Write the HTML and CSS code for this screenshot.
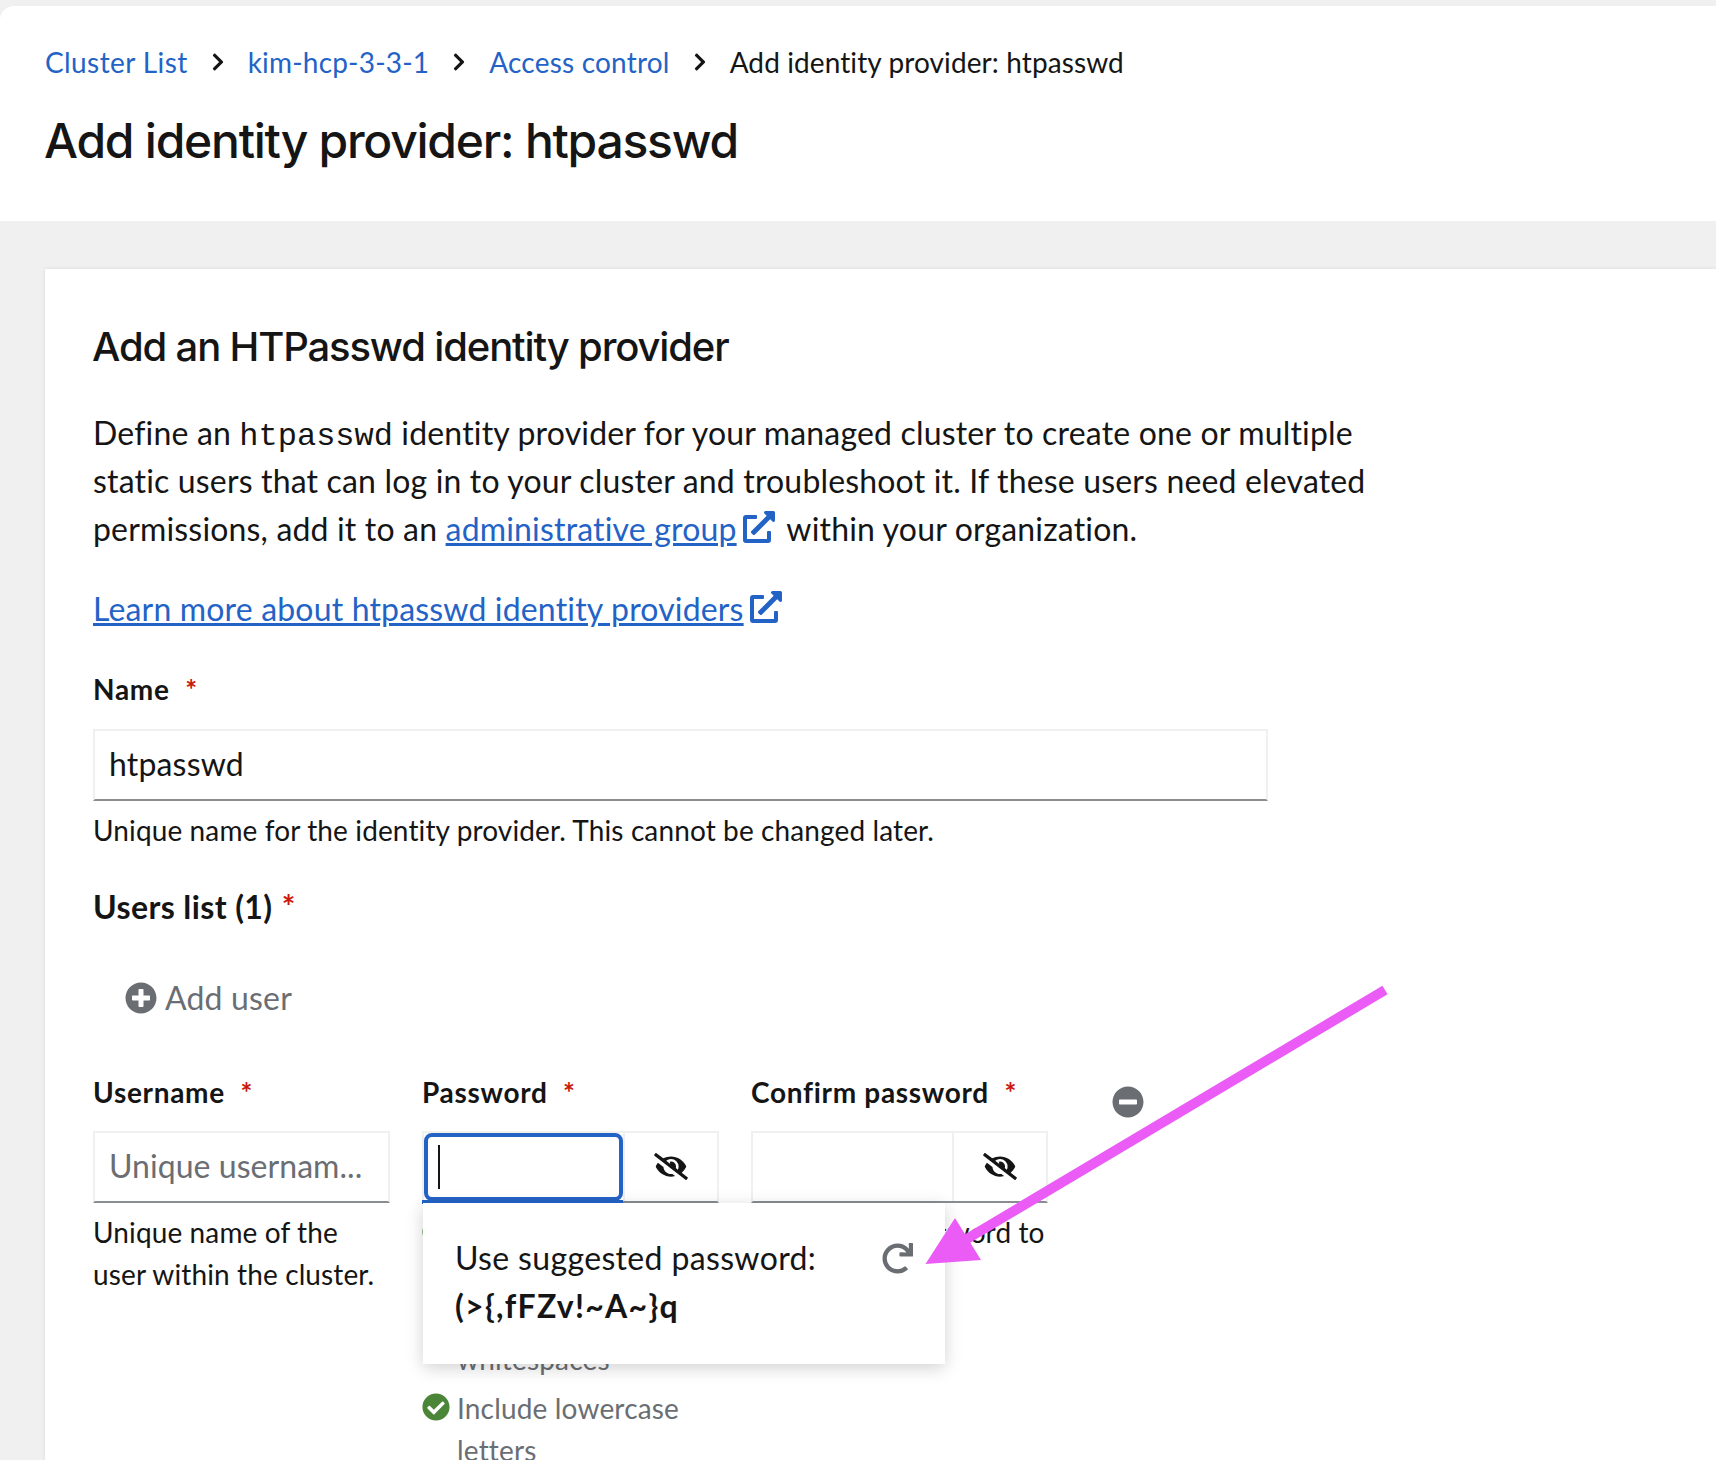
FILE: index.html
```html
<!DOCTYPE html>
<html lang="en">
<head>
    <meta charset="UTF-8">
    <title>Add identity provider: htpasswd</title>
    <link rel="stylesheet" href="styles.css">
</head>
<body>
    <svg class="sprite" xmlns="http://www.w3.org/2000/svg">
        <symbol id="i-angle" viewBox="0 0 320 512"><path d="M285.476 272.971L91.132 467.314c-9.373 9.373-24.569 9.373-33.941 0l-22.667-22.667c-9.357-9.357-9.375-24.522-.04-33.901L188.505 256 34.484 101.255c-9.335-9.379-9.317-24.544.04-33.901l22.667-22.667c9.373-9.373 24.569-9.373 33.941 0L285.475 239.03c9.373 9.372 9.373 24.568.001 33.941z"/></symbol>
        <symbol id="i-ext" viewBox="0 0 512 512"><path d="M432,320H400a16,16,0,0,0-16,16V448H64V128H208a16,16,0,0,0,16-16V80a16,16,0,0,0-16-16H48A48,48,0,0,0,0,112V464a48,48,0,0,0,48,48H400a48,48,0,0,0,48-48V336A16,16,0,0,0,432,320ZM488,0h-128c-21.37,0-32.05,25.91-17,41l35.73,35.73L135,320.37a24,24,0,0,0,0,34L157.67,377a24,24,0,0,0,34,0L435.28,133.32,471,169c15,15,41,4.5,41-17V24A24,24,0,0,0,488,0Z"/></symbol>
        <symbol id="i-plus" viewBox="0 0 512 512"><path d="M256 8C119 8 8 119 8 256s111 248 248 248 248-111 248-248S393 8 256 8zm144 276c0 6.6-5.4 12-12 12h-92v92c0 6.6-5.4 12-12 12h-56c-6.6 0-12-5.4-12-12v-92h-92c-6.6 0-12-5.4-12-12v-56c0-6.6 5.4-12 12-12h92v-92c0-6.6 5.4-12 12-12h56c6.6 0 12 5.4 12 12v92h92c6.6 0 12 5.4 12 12v56z"/></symbol>
        <symbol id="i-minus" viewBox="0 0 512 512"><path d="M256 8C119 8 8 119 8 256s111 248 248 248 248-111 248-248S393 8 256 8zM124 296c-6.6 0-12-5.4-12-12v-56c0-6.6 5.4-12 12-12h264c6.6 0 12 5.4 12 12v56c0 6.6-5.4 12-12 12H124z"/></symbol>
        <symbol id="i-check" viewBox="0 0 512 512"><path d="M504 256c0 136.967-111.033 248-248 248S8 392.967 8 256 119.033 8 256 8s248 111.033 248 248zM227.314 387.314l184-184c6.248-6.248 6.248-16.379 0-22.627l-22.627-22.627c-6.248-6.249-16.379-6.25-22.628 0L216 308.118l-70.059-70.059c-6.248-6.248-16.379-6.248-22.628 0l-22.627 22.627c-6.248 6.248-6.248 16.379 0 22.627l104 104c6.249 6.249 16.379 6.249 22.628-.001z"/></symbol>
        <symbol id="i-redo" viewBox="0 0 512 512"><path d="M500.33 0h-47.41a12 12 0 0 0-12 12.57l4 82.76A247.42 247.42 0 0 0 256 8C119.34 8 7.9 119.53 8 256.19 8.1 393.07 119.1 504 256 504a247.1 247.1 0 0 0 166.18-63.91 12 12 0 0 0 .48-17.43l-34-34a12 12 0 0 0-16.38-.55A176 176 0 1 1 402.1 157.8l-101.53-4.87a12 12 0 0 0-12.57 12v47.41a12 12 0 0 0 12 12h200.33a12 12 0 0 0 12-12V12a12 12 0 0 0-12-12z"/></symbol>
        <symbol id="i-eye" viewBox="0 0 640 512"><path d="M320 400c-75.85 0-137.25-58.71-142.9-133.11L72.2 185.82c-13.79 17.3-26.48 35.59-36.72 55.59a32.35 32.35 0 0 0 0 29.19C89.71 376.41 197.07 448 320 448c26.91 0 52.87-4 77.89-10.46L346 397.39a144.13 144.13 0 0 1-26 2.61zm313.82 58.1l-110.55-85.44a331.25 331.25 0 0 0 81.25-102.07 32.35 32.35 0 0 0 0-29.19C550.29 135.59 442.93 64 320 64a308.15 308.15 0 0 0-147.32 37.7L45.46 3.37A16 16 0 0 0 23 6.18L3.37 31.45A16 16 0 0 0 6.18 53.9l588.36 454.73a16 16 0 0 0 22.46-2.81l19.64-25.27a16 16 0 0 0-2.82-22.45zm-183.72-142l-39.3-30.38A94.75 94.75 0 0 0 416 256a94.76 94.76 0 0 0-121.31-92.21A47.65 47.65 0 0 1 304 192a46.64 46.64 0 0 1-1.54 10l-73.61-56.89A142.31 142.31 0 0 1 320 112a143.92 143.92 0 0 1 144 144c0 21.63-5.29 41.79-13.9 60.11z"/></symbol>
    </svg>

    <header class="page-header">
        <nav class="breadcrumb">
            <a href="#" class="crumb-first">Cluster List</a>
            <svg class="chevron"><use href="#i-angle"/></svg>
            <a href="#">kim-hcp-3-3-1</a>
            <svg class="chevron"><use href="#i-angle"/></svg>
            <a href="#">Access control</a>
            <svg class="chevron"><use href="#i-angle"/></svg>
            <span class="crumb-current">Add identity provider: htpasswd</span>
        </nav>
        <h1>Add identity provider: htpasswd</h1>
    </header>

    <main class="card">
        <h2>Add an HTPasswd identity provider</h2>
        <p class="intro">Define an <code>htpasswd</code> identity provider for your managed cluster to create one or multiple static users that can log in to your cluster and troubleshoot it. If these users need elevated permissions, add it to an <a href="#">administrative group</a><svg class="ext"><use href="#i-ext"/></svg> within your organization.</p>
        <p class="learn"><a href="#">Learn more about htpasswd identity providers</a><svg class="ext"><use href="#i-ext"/></svg></p>

        <label class="field-label">Name <span class="req">*</span></label>
        <div class="text-input name-input">htpasswd</div>
        <div class="helper">Unique name for the identity provider. This cannot be changed later.</div>

        <h3>Users list (1) <span class="req">*</span></h3>

        <button class="add-user"><svg class="add-icon"><use href="#i-plus"/></svg>Add user</button>

        <div class="user-row">
            <div class="user-col">
                <label class="field-label">Username <span class="req">*</span></label>
                <div class="text-input placeholder">Unique usernam...</div>
                <div class="helper">Unique name of the user within the cluster.</div>
            </div>
            <div class="user-col password-col">
                <label class="field-label">Password <span class="req">*</span></label>
                <div class="input-group">
                    <div class="group-input focused"><span class="caret"></span></div>
                    <div class="group-btn"><svg class="eye"><use href="#i-eye"/></svg></div>
                </div>
                <ul class="rules">
                    <li class="rule"><svg class="check"><use href="#i-check"/></svg><span>Be at least 14 characters long and contain no whitespaces</span></li>
                    <li class="rule"><svg class="check"><use href="#i-check"/></svg><span>Include lowercase letters</span></li>
                </ul>
                <div class="popover">
                    <div class="popover-row">
                        <span>Use suggested password:</span>
                        <svg class="redo"><use href="#i-redo"/></svg>
                    </div>
                    <strong>(&gt;{,fFZv!~A~}q</strong>
                </div>
            </div>
            <div class="user-col">
                <label class="field-label">Confirm password <span class="req">*</span></label>
                <div class="input-group">
                    <div class="group-input wide"></div>
                    <div class="group-btn"><svg class="eye"><use href="#i-eye"/></svg></div>
                </div>
                <div class="helper">Retype the password to confirm.</div>
            </div>
            <svg class="remove"><use href="#i-minus"/></svg>
        </div>
    </main>

    <svg class="arrow" viewBox="0 0 1716 1460" xmlns="http://www.w3.org/2000/svg">
        <line x1="1385" y1="990" x2="960" y2="1243" stroke="#ea5cf5" stroke-width="10"/>
        <polygon points="925.5,1264 955,1218 981,1260" fill="#ea5cf5"/>
    </svg>
</body>
</html>
```

FILE: styles.css
```css
html, body {
    margin: 0;
    height: 1460px;
    overflow: hidden;
}
body {
    font-family: "Lato", "Liberation Sans", sans-serif;
    font-size: 32px;
    letter-spacing: 0.17px;
    color: #151515;
    background-color: #f0f0f0;
    padding-top: 6px;
    box-sizing: border-box;
    position: relative;
}
a {
    color: #2463c6;
}
.sprite {
    display: none;
}
.page-header {
    background: white;
    border-top-left-radius: 14px;
    height: 215px;
    padding: 35px 45px 0;
    box-sizing: border-box;
}
.breadcrumb {
    display: flex;
    align-items: center;
    font-size: 28px;
    line-height: 42px;
    letter-spacing: 0.2px;
}
.breadcrumb a {
    text-decoration: none;
}
.crumb-first {
    letter-spacing: 0.4px;
}
.crumb-current {
    letter-spacing: 0.1px;
}
.chevron {
    width: 16px;
    height: 20px;
    margin: 0 22px;
    fill: #151515;
}
h1 {
    font-family: "Inter", sans-serif;
    font-size: 48px;
    font-weight: 500;
    letter-spacing: -1.25px;
    line-height: 60px;
    margin: 28px 0 0 -1px;
}
.card {
    background: white;
    margin: 48px 0 0 45px;
    padding: 52px 48px 0;
    height: 1191px;
    box-sizing: border-box;
    overflow: hidden;
    box-shadow: 0 0 4px rgba(0, 0, 0, 0.1);
}
h2 {
    font-family: "Inter", sans-serif;
    font-size: 40px;
    font-weight: 500;
    letter-spacing: -1.15px;
    line-height: 52px;
    margin: 0 0 36px -1px;
}
.intro {
    width: 1290px;
    line-height: 48px;
    margin: 0 0 32px;
}
code {
    font-family: "Liberation Mono", monospace;
    font-size: 32px;
    line-height: 1;
    letter-spacing: 0;
}
.ext {
    width: 32px;
    height: 32px;
    margin-left: 6px;
    margin-right: 4px;
    fill: #2463c6;
    vertical-align: -2px;
}
.learn {
    line-height: 48px;
    margin: 0 0 35px;
}
.field-label {
    display: block;
    font-size: 28px;
    font-weight: 700;
    letter-spacing: 0.7px;
    line-height: 42px;
}
.req {
    color: #c9190b;
    margin-left: 8px;
}
.text-input {
    box-sizing: border-box;
    height: 72px;
    padding: 0 14px;
    border: 2px solid #f0f0f0;
    border-bottom-color: #8a8d90;
    line-height: 66px;
}
.name-input {
    width: 1175px;
    margin-top: 19px;
}
.helper {
    font-size: 28px;
    line-height: 42px;
    letter-spacing: 0.12px;
    margin-top: 8px;
}
h3 {
    font-size: 32px;
    font-weight: 700;
    letter-spacing: 0.4px;
    line-height: 48px;
    margin: 32px 0 0;
}
h3 .req {
    margin-left: 1px;
}
.add-user {
    display: flex;
    align-items: center;
    gap: 8px;
    font: inherit;
    letter-spacing: inherit;
    color: #6a6e73;
    background: none;
    border: none;
    padding: 0;
    margin: 43px 0 0 32px;
    line-height: 48px;
}
.add-icon {
    width: 32px;
    height: 32px;
    fill: #6a6e73;
}
.user-row {
    display: flex;
    gap: 32px;
    position: relative;
    margin-top: 49px;
}
.user-col {
    width: 297px;
    flex: none;
    position: relative;
}
.user-col .text-input,
.input-group {
    margin-top: 18px;
}
.input-group {
    display: flex;
    height: 72px;
    box-sizing: border-box;
    border: 2px solid #f0f0f0;
    border-bottom: 2px solid #8a8d90;
}
.group-input {
    flex: 1;
    box-sizing: border-box;
    position: relative;
}
.group-input.focused {
    outline: 4px solid #2463c6;
    outline-offset: -4px;
    border-radius: 8px;
}
.group-input.focused::after {
    content: "";
    position: absolute;
    left: -2px;
    right: 0;
    bottom: -3px;
    height: 4px;
    background: #2463c6;
}
.caret {
    position: absolute;
    left: 14px;
    top: 12px;
    width: 2px;
    height: 44px;
    background: #151515;
}
.group-btn {
    width: 92px;
    flex: none;
    border-left: 2px solid #f0f0f0;
    display: flex;
    align-items: center;
    justify-content: center;
}
.eye {
    width: 34px;
    height: 27px;
    margin-bottom: 2px;
    fill: #151515;
}
.placeholder {
    color: #6a6e73;
    letter-spacing: 0.05px;
    white-space: nowrap;
    overflow: hidden;
}
.rules {
    list-style: none;
    margin: 9px 0 0;
    padding: 0;
    font-size: 28px;
    line-height: 42px;
    color: #6a6e73;
}
.rule {
    display: flex;
    gap: 7px;
    margin-bottom: 7px;
}
.rule span {
    width: 240px;
}
.check {
    width: 28px;
    height: 28px;
    margin-top: 6px;
    flex: none;
    fill: #4a8538;
}
.popover {
    position: absolute;
    z-index: 1;
    left: 1px;
    top: 132px;
    width: 522px;
    height: 161px;
    box-sizing: border-box;
    padding: 31px 32px 0;
    background: white;
    box-shadow: 0 4px 16px rgba(0, 0, 0, 0.18);
    line-height: 48px;
    letter-spacing: 0.35px;
}
.popover strong {
    letter-spacing: 1.3px;
}
.popover-row {
    display: flex;
    justify-content: space-between;
    align-items: center;
    padding-right: 1px;
    width: 458px;
}
.redo {
    width: 31px;
    height: 31px;
    fill: #6a6e73;
}
.remove {
    width: 32px;
    height: 32px;
    margin: 15px 0 0 32px;
    flex: none;
    fill: #6a6e73;
}
.arrow {
    position: absolute;
    z-index: 2;
    left: 0;
    top: 0;
    width: 1716px;
    height: 1460px;
    pointer-events: none;
}
```
